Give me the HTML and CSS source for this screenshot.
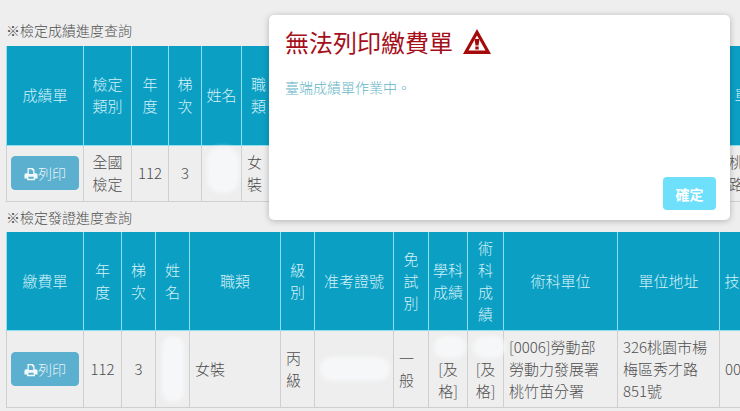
FILE: index.html
```html
<!DOCTYPE html>
<html>
    <head>
        <title>檢定進度查詢</title>
        <meta charset="utf-8">
        <link rel="stylesheet" href="styles.css">
    </head>
    <body>
        <p class="title first">※檢定成績進度查詢</p>
        <table class="grid score">
            <colgroup>
                <col class="c77"><col class="c48"><col class="c37"><col class="c33"><col class="c40"><col class="c34">
                <col class="c34"><col class="c80"><col class="c35"><col class="c39"><col class="c36"><col class="c224"><col class="c82">
            </colgroup>
            <tr class="head">
                <th>成績單</th><th>檢定類別</th><th>年度</th><th>梯次</th><th>姓名</th><th>職類</th>
                <th>級別</th><th>准考證號</th><th>免試別</th><th>學科成績</th><th>術科成績</th><th>術科單位</th><th>單位地址</th>
            </tr>
            <tr class="row">
                <td class="mid btncell"><button class="print"><svg class="ico" viewBox="0 0 16 16"><path d="M4 1h6l2 2v4h1.500a2 2 0 0 1 2 2v4h-3v2H3.500v-2H.5V9a2 2 0 0 1 2-2H4zM5.500 2.500V8h5V4H9V2.500zM5 11v2.500h6V11z" fill-rule="evenodd"/></svg>列印</button></td>
                <td class="mid">全國檢定</td><td class="mid">112</td><td class="mid">3</td>
                <td><span class="blur nameA"></span></td><td>女裝</td>
                <td class="mid">丙級</td><td></td><td class="mid">一般</td><td></td><td></td>
                <td>[0006]勞動部</td><td>桃園市楊<br>路851號</td>
            </tr>
        </table>

        <p class="title">※檢定發證進度查詢</p>
        <table class="grid cert">
            <colgroup>
                <col class="c77"><col class="c38"><col class="c34"><col class="c34"><col class="c91"><col class="c34">
                <col class="c79"><col class="c35"><col class="c39"><col class="c36"><col class="c114"><col class="c102"><col class="c40">
            </colgroup>
            <tr class="head">
                <th>繳費單</th><th>年度</th><th>梯次</th><th>姓名</th><th>職類</th><th>級別</th><th>准考證號</th>
                <th>免試別</th><th>學科成績</th><th>術科成績</th><th>術科單位</th><th>單位地址</th><th class="clip">技能</th>
            </tr>
            <tr class="row tall">
                <td class="mid btncell"><button class="print"><svg class="ico" viewBox="0 0 16 16"><path d="M4 1h6l2 2v4h1.500a2 2 0 0 1 2 2v4h-3v2H3.500v-2H.5V9a2 2 0 0 1 2-2H4zM5.500 2.500V8h5V4H9V2.500zM5 11v2.500h6V11z" fill-rule="evenodd"/></svg>列印</button></td>
                <td class="mid">112</td><td class="mid">3</td>
                <td><span class="blur nameB"></span></td><td>女裝</td><td>丙級</td>
                <td><span class="blur idno"></span></td><td>一般</td>
                <td class="mid"><span class="blur mark"></span>[及格]</td>
                <td class="mid"><span class="blur mark"></span>[及格]</td>
                <td>[0006]勞動部<br>勞動力發展署<br>桃竹苗分署</td>
                <td>326桃園市楊梅區秀才路851號</td>
                <td class="clip">0012</td>
            </tr>
        </table>

        <div class="modal">
            <h2>無法列印繳費單
                <svg class="warn" viewBox="0 0 28 25"><path d="M14 0 28 25H0zM14 6.500 5.500 21.500h17zM11.500 10h5l-1 6.500h-3zM12.300 17.500h3.400v3h-3.400z" fill-rule="evenodd"/></svg>
            </h2>
            <p class="msg">臺端成績單作業中。</p>
            <div class="foot"><button class="ok">確定</button></div>
        </div>
    </body>
</html>
```

FILE: styles.css
```css
html, body
{
    margin: 0;
    height: 411px;
    overflow: hidden;
}
body
{
    position: relative;
    background-color: #eeeeee;
    color: #4f4f4f;
    padding-left: 6px;
    font-family: "Noto Sans CJK TC", "Liberation Sans", sans-serif;
    font-size: 15px;
    font-weight: 300;
}
.title
{
    margin: 5px 0 5px;
    height: 20px;
    line-height: 20px;
    font-size: 14px;
}
.title.first
{
    margin-top: 20px;
    margin-bottom: 6px;
}

table.grid
{
    table-layout: fixed;
    border-collapse: collapse;
    line-height: 22px;
}
table.score { width: 799px; }
table.cert { width: 753px; }

.c33 { width: 33px; }
.c34 { width: 34px; }
.c35 { width: 35px; }
.c36 { width: 36px; }
.c37 { width: 37px; }
.c38 { width: 38px; }
.c39 { width: 39px; }
.c40 { width: 40px; }
.c48 { width: 48px; }
.c77 { width: 77px; }
.c79 { width: 79px; }
.c80 { width: 80px; }
.c82 { width: 82px; }
.c91 { width: 91px; }
.c102 { width: 102px; }
.c114 { width: 114px; }
.c224 { width: 224px; }

tr.head { height: 99px; }
tr.row { height: 56px; }
tr.row.tall { height: 77px; }

th
{
    background-color: #0c9fc4;
    color: #d4f1f7;
    font-weight: 300;
    border: 1px solid #8fe0ee;
    border-top: none;
    padding: 0 4px;
    text-align: center;
}
td
{
    border: 1px solid #cfcfcf;
    padding: 0 5px;
    vertical-align: middle;
}
td.mid { text-align: center; }
td.btncell { padding: 0 4px; }
.clip { white-space: nowrap; overflow: hidden; }

button.print
{
    display: block;
    margin: 0 auto;
    width: 68px;
    height: 34px;
    padding: 0;
    border: 1px solid #5cb0cf;
    border-radius: 4px;
    background-color: #5cb0cf;
    color: #e6f4f8;
    font-family: inherit;
    font-size: 14px;
    font-weight: 300;
}
.ico
{
    width: 14px;
    height: 14px;
    fill: #f2f9fb;
    vertical-align: -2px;
}

.blur
{
    display: block;
    margin: 0 auto;
    background-color: #f6f7f8;
    border-radius: 14px;
    filter: blur(2px);
}
.nameA { width: 32px; height: 46px; margin-bottom: 6px; }
.nameB { width: 22px; height: 66px; }
.idno { width: 70px; height: 24px; }
.mark { width: 32px; height: 22px; }

.modal
{
    position: absolute;
    left: 269px;
    top: 15px;
    width: 461px;
    height: 205px;
    box-sizing: border-box;
    padding: 12px 14px 10px 16px;
    display: flex;
    flex-direction: column;
    background-color: #fff;
    border-radius: 5px;
    box-shadow: 0 1px 6px rgba(0, 0, 0, 0.25);
}
.modal h2
{
    margin: 0;
    display: flex;
    align-items: center;
    gap: 10px;
    height: 29px;
    color: #a50f1a;
    font-size: 24px;
    font-weight: 400;
}
.warn
{
    width: 28px;
    height: 25px;
    fill: #a50a0a;
}
.msg
{
    margin: 21px 0 0;
    flex: 1;
    font-size: 14px;
    line-height: 20px;
    color: #63b4c6;
}
.foot { text-align: right; }
button.ok
{
    width: 53px;
    height: 33px;
    padding: 0;
    border: none;
    border-radius: 4px;
    background-color: #6fe0fb;
    color: #fff;
    font-family: inherit;
    font-size: 14px;
    font-weight: bold;
}
```
